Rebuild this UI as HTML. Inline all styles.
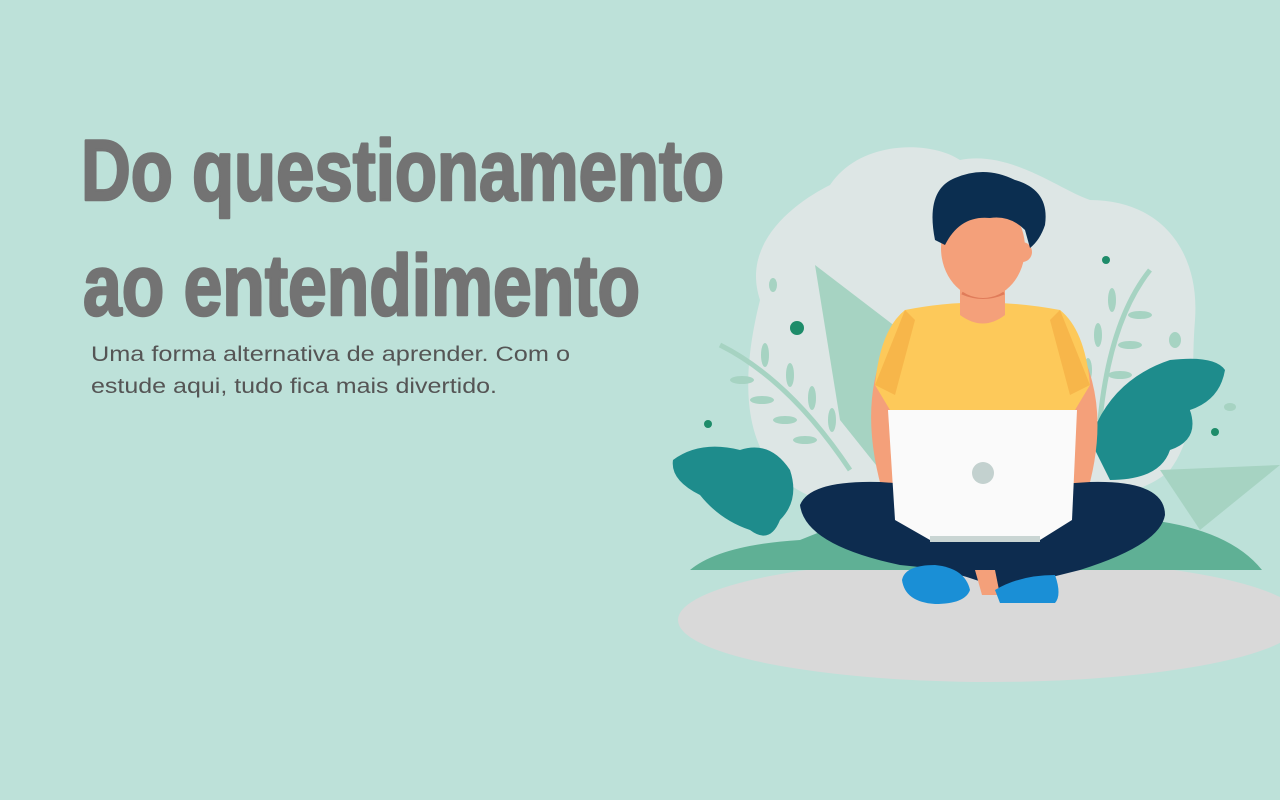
<!DOCTYPE html>
<html><head><meta charset="utf-8"><style>
html,body{margin:0;padding:0;background:#bde1d9;width:1280px;height:800px;overflow:hidden}
svg{display:block}
</style></head><body>
<svg width="1280" height="800" viewBox="0 0 1280 800" xmlns="http://www.w3.org/2000/svg">
<rect width="1280" height="800" fill="#bde1d9"/>
<g font-family="Liberation Sans, Arial, sans-serif" fill="#737373" stroke="#737373" stroke-width="2.5" stroke-linejoin="round" font-weight="bold">
<text x="81" y="200" font-size="86" textLength="643" lengthAdjust="spacingAndGlyphs">Do questionamento</text>
<text x="83" y="315" font-size="86" textLength="557" lengthAdjust="spacingAndGlyphs">ao entendimento</text>
</g>
<g font-family="Liberation Sans, Arial, sans-serif" fill="#555" font-size="21">
<text x="91" y="361" textLength="479" lengthAdjust="spacingAndGlyphs">Uma forma alternativa de aprender.  Com o</text>
<text x="91" y="393" textLength="406" lengthAdjust="spacingAndGlyphs">estude aqui, tudo fica mais divertido.</text>
</g>
<ellipse cx="990" cy="620" rx="312" ry="62" fill="#d9d9d9"/>
<path d="M760 300 C740 240 800 200 830 185 C860 140 930 140 960 160 C1010 150 1060 190 1090 200 C1160 200 1200 250 1195 320 C1190 380 1200 430 1170 470 C1120 520 900 520 820 500 C760 480 730 420 760 300 Z" fill="#dde6e5"/>
<path d="M815 265 L900 330 L880 470 L840 420 Z" fill="#a6d3c2"/>
<g fill="#a6d3c2">
<path d="M720 345 Q790 380 850 470" stroke="#a6d3c2" stroke-width="5" fill="none"/>
<ellipse cx="742" cy="380" rx="12" ry="4"/><ellipse cx="762" cy="400" rx="12" ry="4"/><ellipse cx="785" cy="420" rx="12" ry="4"/><ellipse cx="805" cy="440" rx="12" ry="4"/>
<ellipse cx="765" cy="355" rx="4" ry="12"/><ellipse cx="790" cy="375" rx="4" ry="12"/><ellipse cx="812" cy="398" rx="4" ry="12"/><ellipse cx="832" cy="420" rx="4" ry="12"/>
<path d="M1150 270 Q1110 320 1100 420" stroke="#a6d3c2" stroke-width="5" fill="none"/>
<ellipse cx="1112" cy="300" rx="4" ry="12"/><ellipse cx="1098" cy="335" rx="4" ry="12"/><ellipse cx="1088" cy="370" rx="4" ry="12"/>
<ellipse cx="1140" cy="315" rx="12" ry="4"/><ellipse cx="1130" cy="345" rx="12" ry="4"/><ellipse cx="1120" cy="375" rx="12" ry="4"/>
<ellipse cx="1175" cy="340" rx="6" ry="8"/><ellipse cx="1230" cy="407" rx="6" ry="4"/><ellipse cx="773" cy="285" rx="4" ry="7"/>
</g>
<path d="M1160 470 L1280 465 L1200 530 Z" fill="#a6d3c2"/>
<path d="M690 570 Q720 545 800 540 L900 500 L1060 500 L1150 520 Q1230 530 1262 570 Z" fill="#5fb095"/>
<path d="M673 460 Q700 440 740 450 Q770 440 790 470 Q800 500 780 520 Q770 545 750 530 Q720 520 700 495 Q670 480 673 460 Z" fill="#1e8c8c"/>
<path d="M1090 440 Q1110 380 1170 360 Q1215 355 1225 370 Q1220 400 1190 410 Q1200 440 1170 450 Q1160 480 1110 480 Z" fill="#1e8c8c"/>
<circle cx="797" cy="328" r="7" fill="#1e8c6a"/>
<circle cx="1106" cy="260" r="4" fill="#1e8c6a"/>
<circle cx="708" cy="424" r="4" fill="#1e8c6a"/>
<circle cx="1215" cy="432" r="4" fill="#1e8c6a"/>
<path d="M880 360 Q860 420 885 500 L905 500 L905 380 Z" fill="#f4a07a"/>
<path d="M1085 360 Q1110 420 1085 500 L1065 500 L1065 380 Z" fill="#f4a07a"/>
<path d="M905 310 Q980 295 1060 310 Q1085 330 1090 385 L1075 410 L890 410 L875 385 Q880 330 905 310 Z" fill="#fdc95a"/>
<path d="M905 310 L875 385 L895 395 L915 320 Z M1060 310 L1090 385 L1070 395 L1050 320 Z" fill="#f7b64a"/>
<path d="M960 280 L1005 280 L1005 315 Q983 332 960 315 Z" fill="#f4a07a"/>
<path d="M962 293 Q983 302 1004 293" stroke="#e07c5a" stroke-width="3" fill="none"/>
<ellipse cx="983" cy="248" rx="42" ry="50" fill="#f4a07a"/>
<circle cx="1022" cy="252" r="10" fill="#f4a07a"/>
<path d="M935 240 Q925 190 955 178 Q985 165 1015 180 Q1050 190 1045 225 Q1040 240 1030 248 L1025 230 Q1010 215 990 218 Q960 215 945 245 Z" fill="#0b2e50"/>
<path d="M800 505 Q810 480 880 482 Q980 490 1090 482 Q1165 480 1165 515 Q1160 545 1080 570 L1000 590 Q960 570 900 565 Q805 545 800 505 Z" fill="#0d2c4f"/>
<path d="M888 410 L1077 410 L1072 520 L1040 540 L930 540 L895 520 Z" fill="#fafafa"/>
<rect x="930" y="536" width="110" height="6" fill="#c9d5d3"/>
<circle cx="983" cy="473" r="11" fill="#c3d1cf"/>
<path d="M975 570 L995 570 L1000 595 L982 595 Z" fill="#f4a07a"/>
<path d="M902 580 Q905 565 935 565 Q965 568 970 590 Q965 604 935 604 Q905 602 902 580 Z" fill="#1a8fd6"/>
<path d="M995 590 Q1020 575 1055 575 Q1062 595 1055 603 L1000 603 Z" fill="#1a8fd6"/>
</svg>
</body></html>
